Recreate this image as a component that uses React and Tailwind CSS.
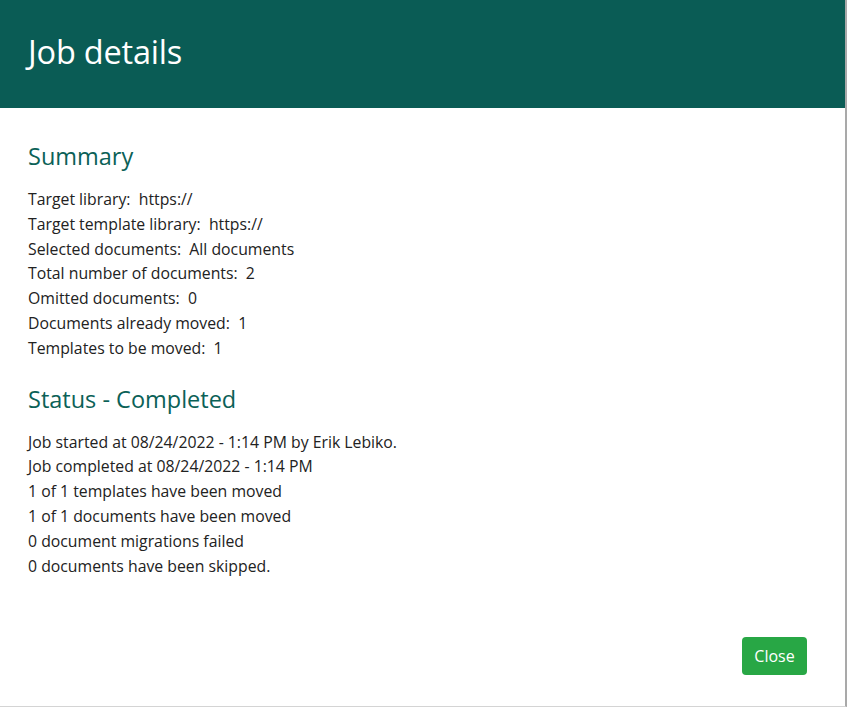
const summary = [
  ["Target library:", "https://"],
  ["Target template library:", "https://"],
  ["Selected documents:", "All documents"],
  ["Total number of documents:", "2"],
  ["Omitted documents:", "0"],
  ["Documents already moved:", "1"],
  ["Templates to be moved:", "1"],
];

const status = [
  "Job started at 08/24/2022 - 1:14 PM by Erik Lebiko.",
  "Job completed at 08/24/2022 - 1:14 PM",
  "1 of 1 templates have been moved",
  "1 of 1 documents have been moved",
  "0 document migrations failed",
  "0 documents have been skipped.",
];

export default function App() {
  return (
    <div
      className="w-[847px] h-[707px] bg-white flex flex-col border-r-2 border-b border-r-[#a9a9a9] border-b-[#d4d4d4] text-[#222] overflow-hidden"
      style={{ fontFamily: '"Open Sans", "Noto Sans", sans-serif' }}
    >
      <div className="h-[108px] bg-[#0a5c55] flex items-center px-7 pb-[4px] shrink-0">
        <h1 className="text-white text-[32.5px] font-normal tracking-[-0.2px]">Job details</h1>
      </div>

      <div className="flex-1 flex flex-col px-7 pt-[30px]">
        <h2 className="text-[#0b6157] text-[23.5px] leading-[36px] mb-[13px]">Summary</h2>
        <div className="flex flex-col text-[15.8px] leading-[24.8px]">
          {summary.map(([k, v]) => (
            <div key={k}>
              {k}&nbsp; {v}
            </div>
          ))}
        </div>

        <h2 className="text-[#0b6157] text-[23.5px] leading-[36px] mt-[20px] mb-[13px]">Status - Completed</h2>
        <div className="flex flex-col text-[15.8px] leading-[24.8px]">
          {status.map((s) => (
            <div key={s}>{s}</div>
          ))}
        </div>

        <div className="mt-auto mb-[31px] flex justify-end pr-[10px]">
          <button className="bg-[#28a745] text-white text-[16px] rounded-[4px] w-[65px] h-[38px] flex items-center justify-center">
            Close
          </button>
        </div>
      </div>
    </div>
  );
}
